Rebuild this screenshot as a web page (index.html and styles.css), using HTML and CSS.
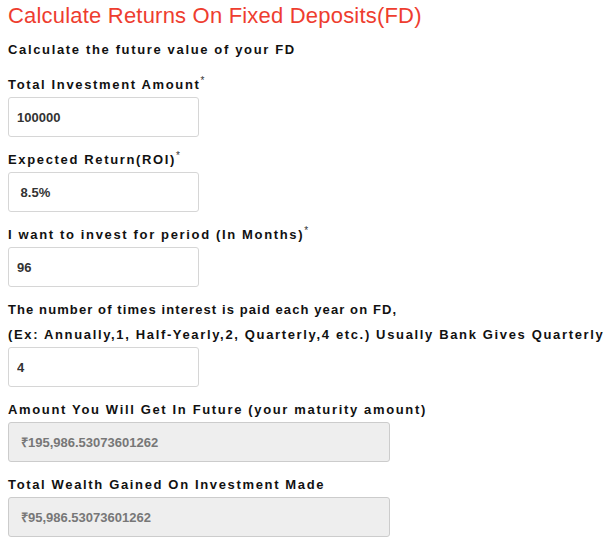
FILE: index.html
```html
<!DOCTYPE html>
<html lang="en">
<head>
<meta charset="utf-8">
<title>FD Calculator</title>
<link rel="stylesheet" href="styles.css">
</head>
<body>
<div class="calc">
  <h1 class="title">Calculate Returns On Fixed Deposits(FD)</h1>
  <p class="subtitle">Calculate the future value of your FD</p>

  <label class="label">Total Investment Amount<span class="req">*</span></label>
  <input class="field" type="text" value="100000">

  <label class="label">Expected Return(ROI)<span class="req">*</span></label>
  <input class="field" type="text" value=" 8.5%">

  <label class="label">I want to invest for period (In Months)<span class="req">*</span></label>
  <input class="field" type="text" value="96">

  <label class="label"><span class="line-first">The number of times interest is paid each year on FD,</span><br>(Ex: Annually,1, Half-Yearly,2, Quarterly,4 etc.) Usually Bank Gives Quarterly</label>
  <input class="field" type="text" value="4">

  <label class="label">Amount You Will Get In Future (your maturity amount)</label>
  <input class="field output" type="text" value="₹195,986.53073601262" readonly>

  <label class="label">Total Wealth Gained On Investment Made</label>
  <input class="field output" type="text" value="₹95,986.53073601262" readonly>
</div>
</body>
</html>
```
FILE: styles.css
```css
html, body {
  margin: 0;
  padding: 0;
  background: #ffffff;
}

.calc {
  padding: 3px 8px;
  font-family: "Liberation Sans", Arial, sans-serif;
  color: #111;
}

.title {
  margin: 0;
  font-size: 22px;
  line-height: 25px;
  font-weight: normal;
  letter-spacing: 0.2px;
  color: #ee3d2f;
}

.subtitle {
  margin: 9px 0 10px;
  font-size: 13px;
  line-height: 25px;
  font-weight: bold;
  letter-spacing: 1.65px;
  color: #111;
  white-space: nowrap;
}

.label {
  display: block;
  font-size: 13px;
  line-height: 25px;
  font-weight: bold;
  letter-spacing: 1.65px;
  color: #111;
  white-space: nowrap;
}

.line-first {
  letter-spacing: 1.1px;
}

.req {
  font-weight: normal;
  font-size: 10px;
  vertical-align: top;
  line-height: 18px;
  letter-spacing: 0;
  color: #333;
}

.field {
  display: block;
  box-sizing: border-box;
  width: 191px;
  height: 40px;
  margin: 0 0 10px;
  padding: 0 8px;
  border: 1px solid #d6d6d6;
  border-radius: 3px;
  background: #fff;
  font-family: "Liberation Sans", Arial, sans-serif;
  font-size: 13px;
  font-weight: bold;
  color: #333;
  outline: none;
}

.output {
  width: 382px;
  padding: 0 12px;
  background: #eeeeee;
  border-color: #cccccc;
  color: #777;
}
```
